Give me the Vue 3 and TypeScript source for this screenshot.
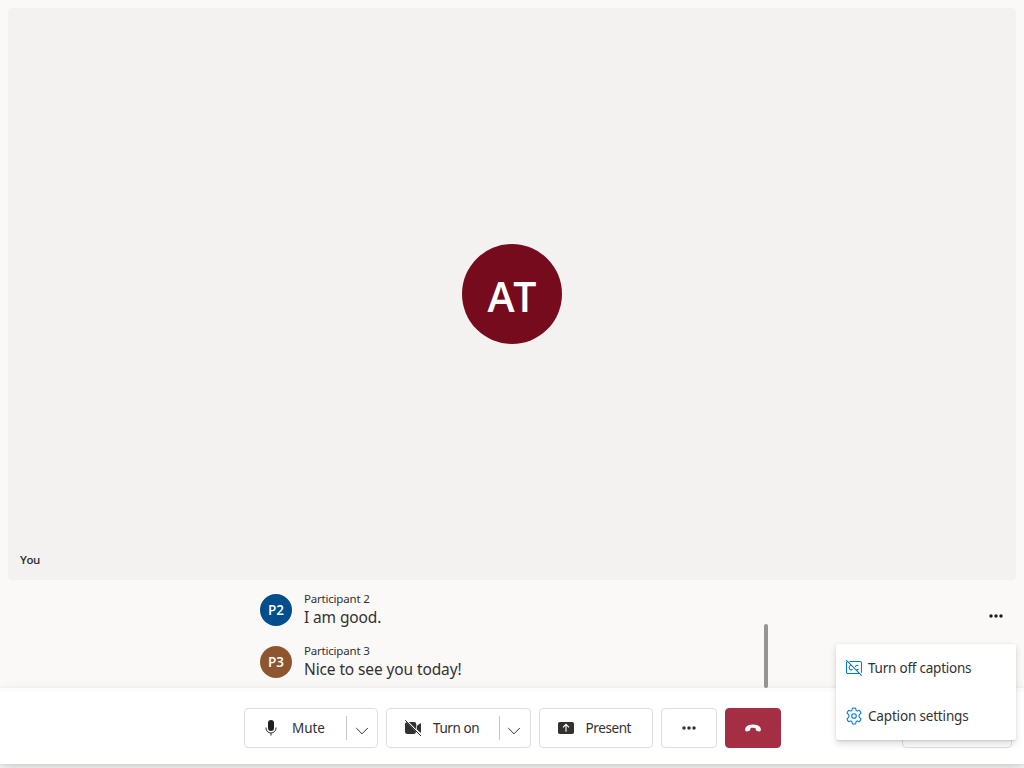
<script setup lang="ts">
interface Caption {
  initials: string
  tone: string
  name: string
  text: string
}

const captions: Caption[] = [
  { initials: 'P2', tone: 'blue', name: 'Participant 2', text: 'I am good.' },
  { initials: 'P3', tone: 'brown', name: 'Participant 3', text: 'Nice to see you today!' },
]
</script>

<template>
  <div class="call">
    <main class="tile">
      <div class="persona">AT</div>
      <span class="tile-name">You</span>
    </main>

    <section class="captions">
      <div class="caption-list">
        <div v-for="c in captions" :key="c.initials" class="caption">
          <div class="avatar" :class="c.tone">{{ c.initials }}</div>
          <div class="caption-body">
            <div class="caption-name">{{ c.name }}</div>
            <div class="caption-text">{{ c.text }}</div>
          </div>
        </div>
        <div class="scroll-thumb"></div>
      </div>
      <button class="more" aria-label="More">
        <svg width="14" height="4" viewBox="0 0 14 4"><circle cx="2" cy="2" r="1.75" /><circle cx="7" cy="2" r="1.75" /><circle cx="12" cy="2" r="1.75" /></svg>
      </button>
      <div class="menu">
        <div class="menu-item">
          <svg class="menu-icon" width="18" height="18" viewBox="0 0 18 18">
            <path d="M4.4 2.5H15a1.5 1.5 0 0 1 1.5 1.5v9.7M14.2 14.5H3a1.5 1.5 0 0 1-1.5-1.5V3.8q0-.6.4-.9M6.1 6.3C4.7 6.600 4.200 7.600 4.200 8.600c0 2 1.700 3 3.400 1.700M13.400 6.600c-1.400-.7-2.700-.1-3 1.200M11.400 10.700q1.100.2 2.100-.5M1.200 1.100l15.500 15.500" />
          </svg>
          <span class="menu-label">Turn off captions</span>
        </div>
        <div class="menu-item">
          <svg class="menu-icon" width="18" height="18" viewBox="0 0 18 18">
            <path d="M7.4 1.2Q9 .8 10.6 1.2L11 3.1Q11.4 4.1 12.5 3.9L14.4 3.3Q15.6 4.5 16 6.1L14.6 7.4Q13.2 9 14.6 10.6L16 11.9Q15.6 13.5 14.4 14.7L12.5 14.1Q11.4 13.9 11 14.9L10.6 16.8Q9 17.2 7.4 16.8L7 14.9Q6.6 13.9 5.5 14.1L3.6 14.7Q2.4 13.5 2 11.9L3.4 10.6Q4.8 9 3.4 7.4L2 6.1Q2.4 4.5 3.6 3.3L5.5 3.9Q6.6 4.1 7 3.1Z" />
            <circle cx="9" cy="9" r="2.3" />
          </svg>
          <span class="menu-label settings">Caption settings</span>
        </div>
      </div>
    </section>

    <footer class="bar">
      <div class="btn mute">
        <svg class="icon" width="20" height="20" viewBox="0 0 20 20">
          <rect x="7" y="2" width="6" height="11" rx="3" />
          <path class="thin" d="M5 9.5v.5a5 5 0 0 0 10 0v-.5M10 15v2.6" />
        </svg>
        <span class="label l-mute">Mute</span>
        <span class="divider"></span>
        <svg class="chevron" width="14" height="8" viewBox="0 0 14 8"><path d="M1.2 1L7 6.8 12.8 1" /></svg>
      </div>
      <div class="btn video">
        <svg class="icon" width="20" height="20" viewBox="0 0 20 20">
          <path d="M4.8 4H11a2.3 2.3 0 0 1 2.3 2.3v6.2ZM3.5 4.1L13 13.6A2.3 2.3 0 0 1 11 16H4.3A2.3 2.3 0 0 1 2 13.7V6.3Q2 4.9 3.5 4.1ZM14 7.8L17 5.5q1-.6 1 .5v8q0 1-.8.6L14 11.8Z" />
          <path class="gap" d="M2.9 1.9l16 16" />
          <path class="thin" d="M2.2 2.2l15.8 15.8" />
        </svg>
        <span class="label l-video">Turn on</span>
        <span class="divider"></span>
        <svg class="chevron" width="14" height="8" viewBox="0 0 14 8"><path d="M1.2 1L7 6.8 12.8 1" /></svg>
      </div>
      <div class="btn present">
        <svg class="icon" width="20" height="20" viewBox="0 0 20 20">
          <rect x="2" y="4" width="16" height="12" rx="1.8" />
          <path class="arrow" d="M10 13.7V6.8M7 9.4l3-3 3 3" />
        </svg>
        <span class="label l-present">Present</span>
      </div>
      <div class="btn options">
        <svg width="14" height="4" viewBox="0 0 14 4"><circle cx="2" cy="2" r="1.75" /><circle cx="7" cy="2" r="1.75" /><circle cx="12" cy="2" r="1.75" /></svg>
      </div>
      <div class="btn hangup">
        <svg width="18" height="10" viewBox="0 0 18 10">
          <path d="M9 1.4c3.5 0 6.2 1.2 7.3 3.2.6 1 .7 2.3.3 3.1-.3.6-.8.8-1.4.7l-2.2-.4c-.7-.1-1.1-.6-1.2-1.2l-.3-1.6C10 4.7 8 4.7 6.5 5.2L6.2 6.8C6.1 7.4 5.7 7.9 5 8l-2.2.4c-.6.1-1.1-.1-1.4-.7-.4-.8-.3-2.1.3-3.1C2.8 2.6 5.5 1.4 9 1.4Z" />
        </svg>
      </div>
      <div class="btn people"></div>
    </footer>
  </div>
</template>

<style>
body {
  margin: 0;
  overflow: hidden;
}
</style>

<style scoped>
.call {
  width: 1024px;
  height: 768px;
  box-sizing: border-box;
  padding: 8px 0 4px;
  display: flex;
  flex-direction: column;
  background: #faf9f8;
  color: #323130;
  font-family: 'Noto Sans', 'Open Sans', sans-serif;
  font-size: 14px;
  overflow: hidden;
}
.tile {
  position: relative;
  flex: 0 0 572px;
  margin: 0 8px;
  border-radius: 4px;
  background: #f3f2f1;
  display: flex;
  align-items: center;
  justify-content: center;
}
.persona {
  width: 100px;
  height: 100px;
  border-radius: 50%;
  background: #750b1c;
  color: #fff;
  font-family: 'Open Sans', sans-serif;
  font-size: 41px;
  font-weight: 600;
  line-height: 104px;
  letter-spacing: -1.5px;
  text-indent: -1.5px;
  text-align: center;
}
.tile-name {
  position: absolute;
  left: 12px;
  bottom: 12px;
  font-family: 'Open Sans', sans-serif;
  font-size: 11.5px;
  line-height: 16px;
  font-weight: 600;
  letter-spacing: -0.4px;
}
.captions {
  position: relative;
  flex: 0 0 108px;
  min-height: 0;
  display: flex;
  justify-content: center;
}
.caption-list {
  position: relative;
  width: 504px;
  height: 108px;
  padding-top: 12px;
  box-sizing: border-box;
}
.caption {
  display: flex;
  height: 52px;
}
.avatar {
  width: 32px;
  height: 32px;
  margin: 2px 12px 0 0;
  border-radius: 50%;
  color: #fff;
  font-family: 'Open Sans', sans-serif;
  font-size: 13.5px;
  font-weight: 600;
  line-height: 32px;
  text-align: center;
}
.avatar.blue {
  background: #004e8c;
}
.avatar.brown {
  background: #8e562e;
}
.caption-body {
  white-space: nowrap;
}
.caption-name {
  font-size: 11.5px;
  line-height: 16px;
  margin-top: -1px;
  letter-spacing: -0.2px;
}
.caption-text {
  font-size: 15.5px;
  line-height: 20px;
  letter-spacing: -0.12px;
}
.scroll-thumb {
  position: absolute;
  right: -4px;
  bottom: 0;
  width: 4px;
  height: 64px;
  border-radius: 2px;
  background: #979593;
}
.more {
  position: absolute;
  right: 20px;
  top: 26px;
  width: 16px;
  height: 20px;
  padding: 0;
  border: 0;
  background: none;
  display: flex;
  align-items: center;
  justify-content: center;
  fill: #201f1e;
}
.menu {
  position: absolute;
  z-index: 3;
  right: 8px;
  top: 64px;
  width: 180px;
  height: 96px;
  background: #fff;
  border-radius: 2px;
  box-shadow: 0 3.2px 7.2px rgba(0, 0, 0, 0.132), 0 0.6px 1.8px rgba(0, 0, 0, 0.108);
}
.menu-item {
  height: 48px;
  display: flex;
  align-items: center;
  padding-left: 9px;
  gap: 5px;
  white-space: nowrap;
}
.menu-icon {
  fill: none;
  stroke: #0078d4;
  stroke-width: 1.05;
}
.menu-label {
  font-size: 13.5px;
  letter-spacing: -0.23px;
}
.settings {
  letter-spacing: -0.17px;
}
.bar {
  position: relative;
  z-index: 2;
  flex: 0 0 76px;
  box-sizing: border-box;
  padding: 20px 12px 16px 244px;
  display: flex;
  gap: 8px;
  background: linear-gradient(#fcfcfc 4px, #fff 4px);
  box-shadow: 0 6.4px 14.4px rgba(0, 0, 0, 0.132), 0 1.2px 3.6px rgba(0, 0, 0, 0.108);
}
.btn {
  height: 40px;
  box-sizing: border-box;
  border: 1px solid #e1dfdd;
  border-radius: 4px;
  background: #fff;
  display: flex;
  align-items: center;
  flex-shrink: 0;
  fill: #323130;
}
.mute {
  width: 134px;
  fill: #201f1e;
}
.video {
  width: 145px;
}
.present {
  width: 114px;
}
.options {
  width: 56px;
  justify-content: center;
}
.hangup {
  width: 56px;
  justify-content: center;
  background: #a42e43;
  border-color: #a42e43;
  fill: #fff;
}
.people {
  width: 110px;
  margin-left: auto;
}
.icon {
  margin-left: 15.5px;
  flex-shrink: 0;
}
.thin,
.chevron path {
  fill: none;
  stroke: #323130;
  stroke-width: 1;
}
.gap {
  fill: none;
  stroke: #fff;
  stroke-width: 1.2;
}
.arrow {
  fill: none;
  stroke: #fff;
  stroke-width: 1.1;
}
.label {
  width: 54px;
  margin-left: 11.5px;
  font-size: 13.5px;
  white-space: nowrap;
}
.l-mute {
  letter-spacing: -0.05px;
}
.l-video {
  width: 66px;
  margin-left: 10.5px;
  letter-spacing: -0.4px;
}
.l-present {
  margin-left: 10px;
  letter-spacing: -0.4px;
}
.divider {
  width: 1px;
  height: 24px;
  background: #c8c6c4;
}
.chevron {
  margin: 5px 0 0 8px;
}
.video .chevron {
  margin-left: 7px;
}
</style>
